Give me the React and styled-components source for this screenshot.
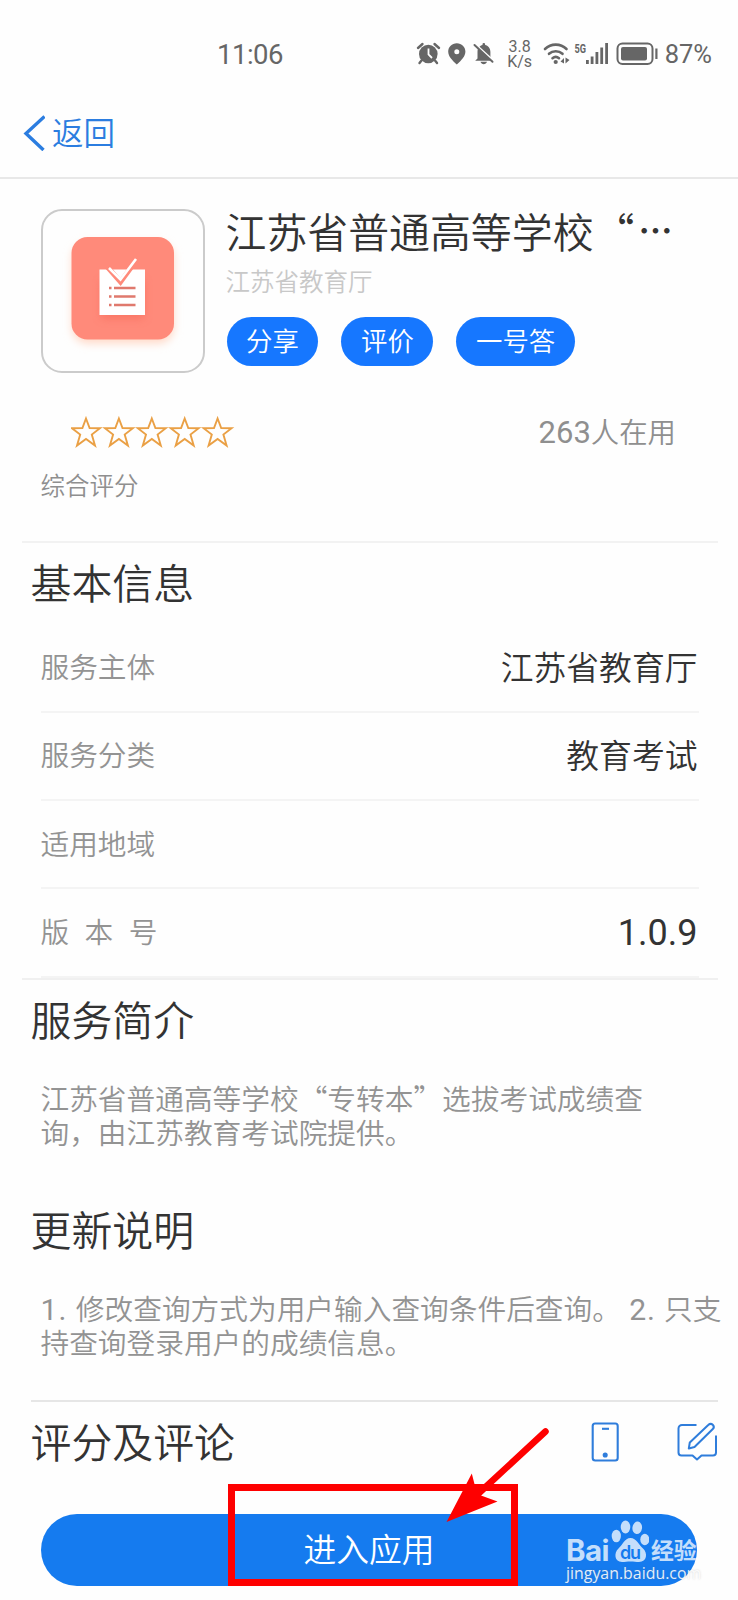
import React from 'react'
import styled, { createGlobalStyle } from 'styled-components'

const GlobalStyle = createGlobalStyle`
  * { box-sizing: border-box; }
  body {
    margin: 0;
    background: #fefefe;
    font-family: "Noto Sans CJK SC", sans-serif;
    font-weight: 350;
    color: #333;
  }
`

const Page = styled.div`
  position: relative;
  width: 738px;
  height: 1600px;
  overflow: hidden;
  background: #fefefe;
`

const StatusBar = styled.div`
  display: flex;
  align-items: center;
  height: 108px;
  padding: 0 26px 0 217px;
  color: #666;
  font-family: Roboto, sans-serif;
  font-weight: 400;
`

const Clock = styled.span`
  flex: 1;
  font-size: 27.5px;
  letter-spacing: -0.5px;
`

const StatusIcons = styled.svg`
  display: block;
  width: ${(props) => props.$w}px;
  height: 36px;
  margin-right: ${(props) => props.$gap || 0}px;
`

const Speed = styled.span`
  width: 32px;
  font-size: 16px;
  line-height: 15px;
  text-align: center;
`

const Battery = styled.span`
  font-size: 25.5px;
`

const NavBar = styled.div`
  display: flex;
  align-items: center;
  height: 71px;
  padding: 0 0 20px 23px;
  border-bottom: 2px solid #e8e8e8;
  color: #2b7de0;
`

const BackText = styled.span`
  margin: -4px 0 0 7px;
  font-size: 31.5px;
  line-height: 48px;
`

const AppHeader = styled.div`
  display: flex;
  height: 227px;
  padding: 30px 40px 0 41px;
`

const AppIcon = styled.div`
  width: 164px;
  height: 164px;
  border: 2px solid #cbcbcb;
  border-radius: 21px;
`

const AppInfo = styled.div`
  margin-left: 21.5px;
`

const AppName = styled.h1`
  margin: 0 0 0 -1px;
  height: 44px;
  font-size: 40.9px;
  line-height: 44px;
  font-weight: 350;
  white-space: nowrap;
`

const Dots = styled.span`
  margin-left: 4px;
  font-size: 34px;
  font-weight: 700;
  line-height: 0;
  vertical-align: 4px;
`

const Owner = styled.div`
  margin: 11px 0 0 -1px;
  font-size: 24.5px;
  line-height: 34px;
  color: #c8c8c8;
`

const Actions = styled.div`
  display: flex;
  gap: 23px;
  margin-top: 19px;
`

const Pill = styled.button`
  height: 49px;
  padding: 0 19.6px 3px;
  border: none;
  border-radius: 25px;
  background: #1677ff;
  color: #fff;
  font: inherit;
  font-size: 26.4px;
  line-height: 46px;
`

const Rating = styled.div`
  height: 137px;
  margin: 0 20px 0 22px;
  padding: 7px 42px 0 18.5px;
  border-bottom: 2px solid #f2f2f2;
`

const RatingRow = styled.div`
  display: flex;
  justify-content: space-between;
  align-items: center;
  height: 38px;
  padding-left: 30.5px;
`

const UserCount = styled.span`
  font-size: 28.4px;
  line-height: 36px;
  margin-top: -2px;
  color: #8f8f8f;
`

const Num = styled.span`
  font-family: Roboto, sans-serif;
  font-size: ${(props) => props.$size || '1.05em'};
  font-weight: 400;
  line-height: 0;
  letter-spacing: ${(props) => props.$spacing || 'normal'};
  white-space: pre;
`

const RatingLabel = styled.div`
  margin-top: 16px;
  font-size: 24.5px;
  line-height: 35px;
  color: #8f8f8f;
`

const SectionTitle = styled.h2`
  margin: 0;
  padding-left: 30.5px;
  height: ${(props) => props.$height || 80}px;
  font-size: 40.9px;
  line-height: 77px;
  font-weight: 350;
`

const InfoList = styled.div`
  margin: 1.5px 39px 0 41px;
`

const InfoRow = styled.div`
  display: flex;
  justify-content: space-between;
  align-items: center;
  height: 88.3px;
  padding-bottom: 4px;
  border-bottom: 2px solid #f4f4f4;
`

const InfoLabel = styled.span`
  margin-left: -0.5px;
  font-size: 28.7px;
  color: #939393;
  white-space: pre;
  word-spacing: ${(props) => (props.$wide ? '9px' : '0')};
`

const InfoValue = styled.span`
  font-size: 32.8px;
  padding-right: 1.5px;
`

const Divider = styled.div`
  height: 2px;
  margin: ${(props) => props.$margin};
  background: ${(props) => props.$color};
`

const Paragraph = styled.p`
  margin: 0;
  padding-left: 40.5px;
  height: ${(props) => props.$height}px;
  font-size: 28.7px;
  line-height: 34px;
  color: #939393;
  white-space: nowrap;
`

const CommentBar = styled.div`
  display: flex;
  align-items: flex-start;
  justify-content: space-between;
  height: 112px;
  padding-right: 20px;
`

const CommentIcons = styled.div`
  display: flex;
  gap: 58px;
  padding-top: 20px;
`

const EnterButton = styled.button`
  display: block;
  width: 656px;
  height: 72px;
  margin-left: 41px;
  padding: 0 0 4px;
  border: none;
  border-radius: 36px;
  background: #157bef;
  color: #fff;
  font: inherit;
  font-size: 32.8px;
  line-height: 68px;
`

// marks drawn over the page
const Annotation = styled.svg`
  position: absolute;
  left: 0;
  top: 1400px;
`

const Watermark = styled.div`
  position: absolute;
  left: 566px;
  top: 1519px;
  width: 140px;
  color: rgba(255, 255, 255, 0.75);
`

const LogoRow = styled.div`
  display: flex;
  align-items: flex-end;
  height: 44px;
`

const LogoWord = styled.span`
  width: 45px;
  font-family: Inter, sans-serif;
  font-size: 29.5px;
  font-weight: 700;
  line-height: 26px;
  letter-spacing: -0.6px;
`

const LogoCn = styled.span`
  margin-left: 2px;
  font-size: 22.8px;
  font-weight: 700;
  line-height: 27px;
`

const SiteUrl = styled.div`
  font-family: "Open Sans", sans-serif;
  font-size: 15.9px;
  font-weight: 400;
  line-height: 20px;
  color: rgba(255, 255, 255, 0.88);
  text-shadow: 0 0 2px rgba(120, 120, 120, 0.35);
`

const infoRows = [
  { label: '服务主体', value: '江苏省教育厅' },
  { label: '服务分类', value: '教育考试' },
  { label: '适用地域', value: '' },
  { label: '版 本 号', value: <Num $size="36px">1.0.9</Num>, wide: true },
]

const Star = ({ x }) => (
  <path
    transform={`translate(${x} 0)`}
    d="M15 2.5 L18.6 12 L29 12.2 L20.8 18.5 L24 29.5 L15 23 L6 29.5 L9.2 18.5 L1 12.2 L11.4 12 Z"
    fill="none"
    stroke="#eaa045"
    strokeWidth="1.9"
  />
)

const LeftStatus = () => (
  <StatusIcons $w={90} viewBox="414 36 90 36" fill="#666">
    <circle cx="428.3" cy="54" r="9.3" />
    <path d="M418 48 l4.5-4 M434.5 44 l4.5 4 M421.5 60.5 l-2 2.5 M435 60.5 l2 2.5" stroke="#666" strokeWidth="2.4" strokeLinecap="round" />
    <path d="M428.5 48.5 V54.5 L432 58" fill="none" stroke="#fefefe" strokeWidth="1.8" />
    <path fillRule="evenodd" d="M456.8 43.2 c-4.9 0 -8.6 3.7 -8.6 8.4 c0 5 4 8.8 8.6 13 c4.6 -4.2 8.6 -8 8.6 -13 c0 -4.7 -3.7 -8.4 -8.6 -8.4z m0 6 a2.5 2.5 0 1 1 0 5 a2.5 2.5 0 1 1 0 -5z" />
    <path d="M475.2 60.8 L477.5 58.5 V52 c0-4 2.5-6.2 5-6.9 v-.8 a1.3 1.3 0 0 1 2.6 0 v.8 c3 .7 5.3 3.2 5.3 6.9 v6.5 l2.5 2.3z M480.5 61.8 h6.5 c-.8 3.2-5.7 3.2-6.5 0z" />
    <path d="M474.5 43.5 L494 61.3" stroke="#fefefe" strokeWidth="2" />
    <path d="M474.5 45 L492.5 61.8" stroke="#666" strokeWidth="2" strokeLinecap="round" />
  </StatusIcons>
)

const RightStatus = () => (
  <StatusIcons $w={126} $gap={3} viewBox="536 36 126 36" fill="#666">
    <g fill="none" stroke="#666" strokeWidth="2.6" strokeLinecap="round">
      <path d="M545 49 a15.5 15.5 0 0 1 21.5 0" />
      <path d="M549 53.8 a10 10 0 0 1 13.5 0" />
      <path d="M552.5 58.2 a5 5 0 0 1 6.5 0" />
    </g>
    <circle cx="555.7" cy="62" r="2.1" />
    <path d="M560.5 61.5 l3.5-3.5 v5.5z M565.5 57.5 v6 l4-3.5z" />
    <text x="574.5" y="52.5" fontSize="12.5" fontWeight="700" textLength="11.5" lengthAdjust="spacingAndGlyphs">5G</text>
    <path d="M586 60h2.8v4H586z M590.7 56.5h2.8v7.5h-2.8z M595.5 52h2.8v12h-2.8z M600.3 47.5h2.8v16.5h-2.8z M605.2 43h2.8v21h-2.8z" />
    <rect x="617.5" y="43.5" width="35" height="20.5" rx="5" fill="none" stroke="#666" strokeWidth="2" />
    <rect x="621" y="47" width="26" height="13.5" rx="2" />
    <path d="M655.3 48.5h2.2v10.5h-2.2z" />
  </StatusIcons>
)

const App = () => {
  return (
    <>
      <GlobalStyle />
      <Page>
        <StatusBar>
          <Clock>11:06</Clock>
          <LeftStatus />
          <Speed>3.8 K/s</Speed>
          <RightStatus />
          <Battery>87%</Battery>
        </StatusBar>
        <NavBar>
          <svg width="22" height="36" viewBox="0 0 22 36" fill="none">
            <path d="M21.5 1.5 L3 18.5 L20.5 35" stroke="#2b7de0" strokeWidth="3.4" />
          </svg>
          <BackText>返回</BackText>
        </NavBar>

        <AppHeader>
          <AppIcon>
            <svg width="160" height="160" viewBox="43 210.5 160 160">
              <defs>
                <filter id="glow" x="-20%" y="-20%" width="140%" height="150%">
                  <feGaussianBlur stdDeviation="4" />
                </filter>
              </defs>
              <rect x="72" y="242" width="102" height="101" rx="16" fill="#ffd9c8" filter="url(#glow)" />
              <rect x="71.500" y="236.5" width="102.5" height="102.5" rx="16" fill="#ff8a7a" />
              <rect x="101" y="280" width="43" height="38" fill="#f4604f" opacity="0.5" filter="url(#glow)" />
              <rect x="99.5" y="269" width="45.5" height="45.5" fill="#fff" />
              <path d="M107 266 L120.5 281.5 L137 259" fill="none" stroke="#ff8a7a" strokeWidth="5" />
              <path d="M109 267.5 L120.5 279 L136 258.5" fill="none" stroke="#fff" strokeWidth="2.6" />
              <path d="M109 287.5h2.5 M114 287.5h21.5 M109 296h2.5 M114 296h21.5 M109 304.5h2.5 M114 304.5h21.5" stroke="#e0796d" strokeWidth="2.3" />
            </svg>
          </AppIcon>
          <AppInfo>
            <AppName lang="zh-CN">江苏省普通高等学校“<Dots>…</Dots></AppName>
            <Owner>江苏省教育厅</Owner>
            <Actions>
              <Pill>分享</Pill>
              <Pill>评价</Pill>
              <Pill>一号答</Pill>
            </Actions>
          </AppInfo>
        </AppHeader>

        <Rating>
          <RatingRow>
            <svg width="164" height="32" viewBox="0 0 164 32">
              {[0, 1, 2, 3, 4].map((i) => (
                <Star key={i} x={i * 32.9} />
              ))}
            </svg>
            <UserCount><Num $size="31px">263</Num>人在用</UserCount>
          </RatingRow>
          <RatingLabel>综合评分</RatingLabel>
        </Rating>

        <SectionTitle>基本信息</SectionTitle>
        <InfoList>
          {infoRows.map((row) => (
            <InfoRow key={row.label}>
              <InfoLabel $wide={row.wide}>{row.label}</InfoLabel>
              <InfoValue>{row.value}</InfoValue>
            </InfoRow>
          ))}
        </InfoList>
        <Divider $margin="0 20px 0 22px" $color="#f0f0f0" />

        <SectionTitle $height={101}>服务简介</SectionTitle>
        <Paragraph $height={109} lang="zh-CN">
          江苏省普通高等学校“专转本”选拔考试成绩查
          <br />
          询，由江苏教育考试院提供。
        </Paragraph>
        <SectionTitle $height={101}>更新说明</SectionTitle>
        <Paragraph $height={109.5} lang="zh-CN">
          <Num $spacing="1px">1. </Num>修改查询方式为用户输入查询条件后查询。<Num $spacing="0.8px"> 2. </Num>只支
          <br />
          持查询登录用户的成绩信息。
        </Paragraph>
        <Divider $margin="0 20px 0 31px" $color="#e6e6e6" />

        <CommentBar>
          <SectionTitle>评分及评论</SectionTitle>
          <CommentIcons>
            <svg width="28" height="40" viewBox="591 1422 28 40" fill="none" stroke="#2f7ddb" strokeWidth="2.1">
              <rect x="592.7" y="1423.5" width="25" height="37" rx="2.5" />
              <path d="M602 1428.8h7" />
              <circle cx="605.2" cy="1455" r="1.5" fill="#2f7ddb" />
            </svg>
            <svg width="41" height="40" viewBox="677 1422 41 40" fill="none" stroke="#2f7ddb" strokeWidth="2" strokeLinejoin="round">
              <path d="M696.5 1425 H682 a3.5 3.5 0 0 0 -3.5 3.5 V1452.5 a3 3 0 0 0 3 3 H692.5 L697 1459.5 L701.5 1455.5 H713 a3 3 0 0 0 3 -3 V1435.5" />
              <path d="M688.8 1448.5 L689.8 1442.5 L708.5 1424.8 a2.8 2.8 0 0 1 4.3 4.2 L694.5 1447 Z" />
            </svg>
          </CommentIcons>
        </CommentBar>
        <EnterButton>进入应用</EnterButton>

        <Annotation width="738" height="200" viewBox="0 1400 738 200">
          <rect x="231.5" y="1487.5" width="283" height="95" fill="none" stroke="#fe0000" strokeWidth="7" />
          <path d="M545.5 1431.5 L478 1494" stroke="#fe0000" strokeWidth="6.5" strokeLinecap="round" />
          <path d="M446.5 1522 L471.8 1473.5 L475.5 1488 L481 1495.5 L497.5 1501.5 Z" fill="#fe0000" />
        </Annotation>
        <Watermark>
          <LogoRow>
            <LogoWord>Bai</LogoWord>
            <svg width="38" height="44" viewBox="611 1519 38 44" fill="#fff" fillOpacity="0.75">
              <ellipse cx="616.3" cy="1536" rx="4.6" ry="6.3" />
              <ellipse cx="625.5" cy="1527" rx="4.8" ry="6.5" />
              <ellipse cx="637.2" cy="1527.8" rx="4.8" ry="6.3" transform="rotate(8 637 1528)" />
              <ellipse cx="644.8" cy="1539.5" rx="4.5" ry="5.8" />
              <path d="M630.5 1538 c-6 0 -8 7 -12 10.5 c-5 4.5 -4 13.5 3.5 13.5 c3 0 5-.6 8.5-.6 s5.5.6 8.5.6 c8 0 9-9 4-13.5 c-4-3.5-6.5-10.5-12.5-10.5z" />
              <text x="620" y="1558.5" fontFamily="Inter, sans-serif" fontSize="18" fontWeight="600" textLength="21" fill="#157bef" fillOpacity="1">du</text>
            </svg>
            <LogoCn>经验</LogoCn>
          </LogoRow>
          <SiteUrl>jingyan.baidu.com</SiteUrl>
        </Watermark>
      </Page>
    </>
  )
}

export default App
